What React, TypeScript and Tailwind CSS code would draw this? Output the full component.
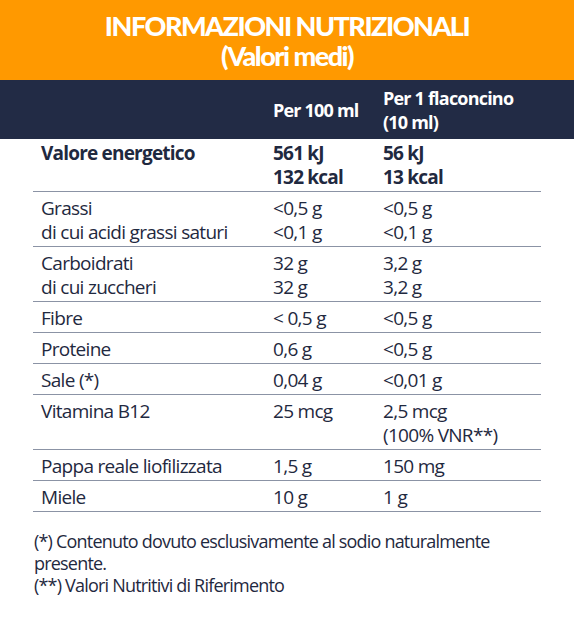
import React from "react";

type Row = { label: string[]; a: string[]; b: string[]; bold?: boolean };

const rows: Row[] = [
  { label: ["Valore energetico"], a: ["561 kJ", "132 kcal"], b: ["56 kJ", "13 kcal"], bold: true },
  { label: ["Grassi", "di cui acidi grassi saturi"], a: ["<0,5 g", "<0,1 g"], b: ["<0,5 g", "<0,1 g"] },
  { label: ["Carboidrati", "di cui zuccheri"], a: ["32 g", "32 g"], b: ["3,2 g", "3,2 g"] },
  { label: ["Fibre"], a: ["< 0,5 g"], b: ["<0,5 g"] },
  { label: ["Proteine"], a: ["0,6 g"], b: ["<0,5 g"] },
  { label: ["Sale (*)"], a: ["0,04 g"], b: ["<0,01 g"] },
  { label: ["Vitamina B12"], a: ["25 mcg"], b: ["2,5 mcg", "(100% VNR**)"] },
  { label: ["Pappa reale liofilizzata"], a: ["1,5 g"], b: ["150 mg"] },
  { label: ["Miele"], a: ["10 g"], b: ["1 g"] },
];

function Lines({ items }: { items: string[] }) {
  return (
    <div>
      {items.map((t, i) => (
        <div key={i}>{t}</div>
      ))}
    </div>
  );
}

export default function App() {
  return (
    <div className="w-[575px] h-[618px] bg-white font-['Open_Sans',sans-serif] text-[#1f2940]">
      <header className="mr-[1px] h-[80px] bg-[#ff9900] flex flex-col items-center justify-center font-['Lato',sans-serif] font-black text-white text-[27px] leading-[30px] tracking-[-1.5px] pt-[1px]">
        <div>INFORMAZIONI NUTRIZIONALI</div>
        <div>(Valori medi)</div>
      </header>

      <div className="mr-[1px] h-[59px] bg-[#222b45] grid grid-cols-[273px_110px_1fr] items-center text-white font-bold text-[18px] leading-[24px] tracking-[-0.8px]">
        <div />
        <div>Per 100 ml</div>
        <div>
          <div>Per 1 flaconcino</div>
          <div>(10 ml)</div>
        </div>
      </div>

      <div className="ml-[33px] w-[508px] text-[19px] leading-[24px] tracking-[-0.7px]">
        {rows.map((r, i) => (
          <div
            key={i}
            className={`grid grid-cols-[240px_110px_1fr] border-b border-[#8b93a5] pb-[2px] ${
              r.bold ? "font-bold tracking-[-0.8px] pt-[2px]" : "font-normal pt-[4px]"
            }`}
          >
            <div className="pl-2">
              <Lines items={r.label} />
            </div>
            <Lines items={r.a} />
            <Lines items={r.b} />
          </div>
        ))}
      </div>

      <p className="ml-[34px] mt-[18px] w-[500px] text-[18px] leading-[22px] font-normal tracking-[-0.8px]">
        (*) Contenuto dovuto esclusivamente al sodio naturalmente presente.
        <br />
        (**) Valori Nutritivi di Riferimento
      </p>
    </div>
  );
}
